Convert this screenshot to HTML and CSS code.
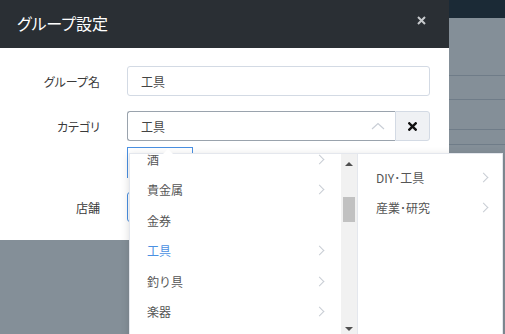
FILE: index.html
```html
<!DOCTYPE html>
<html lang="ja">
<head>
    <meta charset="UTF-8">
    <title>グループ設定</title>
    <link rel="stylesheet" href="styles.css">
</head>
<body>
    <div class="screen">
        <div class="modal">
            <div class="modal-header">
                <h2>グループ設定</h2>
                <span class="close">
                    <svg width="9" height="9" viewBox="0 0 9 9"><path d="M1 1 L8 8 M8 1 L1 8" stroke="#c7cacd" stroke-width="2"/></svg>
                </span>
            </div>
            <div class="modal-body">
                <div class="row">
                    <label>グループ名</label>
                    <div class="input">工具</div>
                </div>
                <div class="row">
                    <label>カテゴリ</label>
                    <div class="select-group">
                        <div class="select">
                            <span>工具</span>
                            <svg width="14" height="8" viewBox="0 0 14 8"><polyline points="1,7 7,1.5 13,7" fill="none" stroke="#c9ced6" stroke-width="1.2"/></svg>
                        </div>
                        <button class="clear">
                            <svg width="9" height="9" viewBox="0 0 9 9"><path d="M1.3 1.3 L7.7 7.7 M7.7 1.3 L1.3 7.7" stroke="#111" stroke-width="2.4" stroke-linecap="square"/></svg>
                        </button>
                    </div>
                </div>
                <div class="row row-sub">
                    <div class="focus-box"></div>
                </div>
                <div class="row">
                    <label>店舗</label>
                    <div class="input input-focus"></div>
                </div>
            </div>
        </div>

        <div class="side">
            <div class="side-top"></div>
            <div class="side-row" style="height: 58px"></div>
            <div class="side-row" style="height: 24px"></div>
            <div class="side-row" style="height: 30px"></div>
            <div class="side-row" style="height: 15px"></div>
        </div>

        <!-- カスケードメニュー -->
        <div class="cascader">
            <div class="menu menu-main">
                <ul class="menu-list">
                    <li>酒<span class="arrow"></span></li>
                    <li>貴金属<span class="arrow"></span></li>
                    <li>金券</li>
                    <li class="active">工具<span class="arrow"></span></li>
                    <li>釣り具<span class="arrow"></span></li>
                    <li>楽器<span class="arrow"></span></li>
                </ul>
                <div class="scrollbar">
                    <span class="sb-up"></span>
                    <span class="sb-thumb"></span>
                    <span class="sb-down"></span>
                </div>
            </div>
            <div class="menu menu-sub">
                <ul class="menu-list">
                    <li>DIY･工具<span class="arrow"></span></li>
                    <li>産業･研究<span class="arrow"></span></li>
                </ul>
            </div>
        </div>
    </div>
</body>
</html>
```

FILE: styles.css
```css
/* Reset */
* {
    margin: 0;
    padding: 0;
    box-sizing: border-box;
}

body {
    font-family: "Noto Sans CJK JP", "Noto Sans", sans-serif;
    font-size: 12px;
    color: #444;
    overflow: hidden;
}

.screen {
    position: relative;
    width: 505px;
    height: 334px;
    background-color: #848f98;
    display: flex;
    align-items: flex-start;
    overflow: hidden;
}

/* モーダル */
.modal {
    width: 449px;
    background-color: #fff;
}

.modal-header {
    height: 48px;
    background-color: #2a2f34;
    display: flex;
    align-items: center;
    justify-content: space-between;
    padding: 0 23px 0 17px;
}

.modal-header h2 {
    font-size: 16px;
    font-weight: 400;
    color: #fff;
    font-feature-settings: "palt";
    margin-top: -2px;
}

.close {
    display: flex;
    margin-top: -8px;
}

.modal-body {
    padding: 18px 19px 18px 0;
}

.row {
    display: flex;
    align-items: center;
    height: 30px;
    margin-bottom: 15px;
}

.row:last-child {
    margin-bottom: 0;
}

.row label {
    width: 100px;
    margin-right: 27px;
    text-align: right;
    font-size: 12px;
    color: #3a3a3a;
    font-feature-settings: "palt";
}

.input {
    flex: 1;
    height: 30px;
    border: 1px solid #d3dae4;
    border-radius: 3px;
    padding: 0 13px;
    display: flex;
    align-items: center;
    color: #444;
}

.input-focus {
    border-color: #4a90e2;
}

.select-group {
    flex: 1;
    display: flex;
    height: 30px;
}

.select {
    flex: 1;
    border: 1px solid #9aa3ad;
    border-right: none;
    border-radius: 3px 0 0 3px;
    padding: 0 10px 0 13px;
    display: flex;
    align-items: center;
    justify-content: space-between;
}

.clear {
    width: 35px;
    background-color: #eff1f4;
    border: 1px solid #d3dae4;
    border-radius: 0 3px 3px 0;
    display: flex;
    align-items: center;
    justify-content: center;
}

.row-sub {
    height: 31px;
    margin-top: -9px;
    margin-bottom: 14px;
    padding-left: 127px;
}

.focus-box {
    width: 66px;
    height: 31px;
    border: 1px solid #4a90e2;
    border-bottom: none;
}

/* 背景側 */
.side {
    flex: 1;
}

.side-top {
    height: 18px;
    background-color: #1b2a36;
}

.side-row {
    border-bottom: 1px solid #6f7c88;
}

/* カスケードメニュー */
.cascader {
    position: absolute;
    left: 129px;
    top: 153px;
    width: 374px;
    height: 190px;
    display: flex;
    background-color: #fff;
    border: 1px solid #e4e7ed;
    box-shadow: 0 2px 8px rgba(0, 0, 0, 0.15);
}

.cascader::before {
    content: "";
    position: absolute;
    top: -5px;
    left: 33px;
    border-left: 5px solid transparent;
    border-right: 5px solid transparent;
    border-bottom: 5px solid #fff;
}

.menu {
    position: relative;
    overflow: hidden;
}

.menu-main {
    width: 228px;
    border-right: 1px solid #e4e7ed;
    display: flex;
}

.menu-sub {
    flex: 1;
    padding-top: 8px;
}

.menu-list {
    list-style: none;
    flex: 1;
}

.menu-main .menu-list {
    margin-top: -10px;
}

.menu-list li {
    height: 30.5px;
    display: flex;
    align-items: center;
    justify-content: space-between;
    padding: 0 18px 0 17px;
    color: #555;
    font-size: 12px;
}

.menu-sub .menu-list li {
    height: 30px;
    padding: 0 15px 0 18px;
}

.menu-list li.active {
    color: #4a90e2;
}

.arrow {
    width: 7px;
    height: 7px;
    border-top: 1px solid #c8cdd4;
    border-right: 1px solid #c8cdd4;
    transform: rotate(45deg);
}

.scrollbar {
    width: 16px;
    background-color: #f1f1f1;
    position: relative;
}

.sb-up,
.sb-down {
    position: absolute;
    left: 4px;
    border-left: 4px solid transparent;
    border-right: 4px solid transparent;
}

.sb-up {
    top: 8px;
    border-bottom: 4px solid #505050;
}

.sb-down {
    top: 173px;
    border-top: 4px solid #505050;
}

.sb-thumb {
    position: absolute;
    left: 2px;
    top: 43px;
    width: 12px;
    height: 25px;
    background-color: #c1c1c1;
}
```
